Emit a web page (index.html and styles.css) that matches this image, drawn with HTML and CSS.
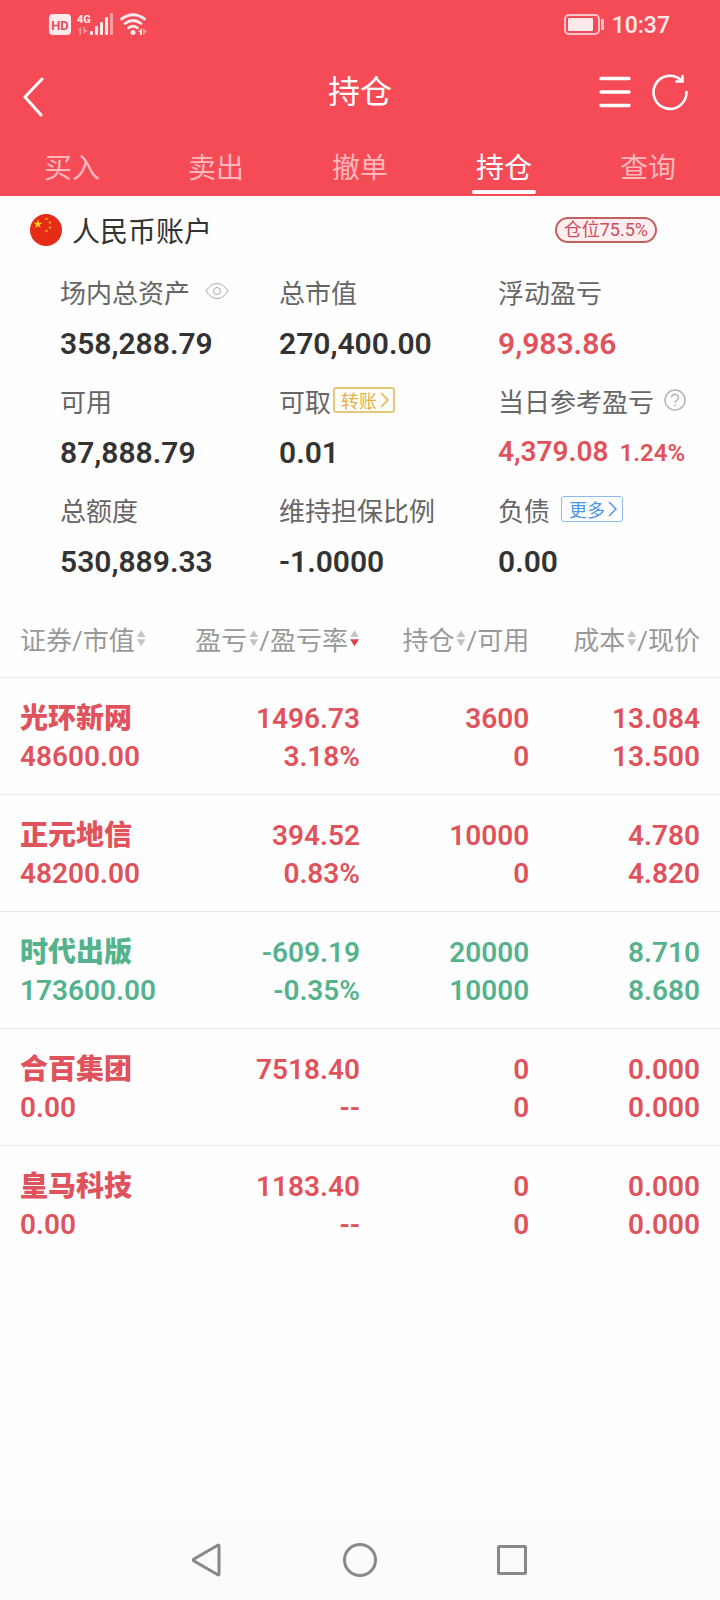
FILE: index.html
```
<!DOCTYPE html>
<html lang="zh-CN">
<head>
<meta charset="utf-8">
<meta name="viewport" content="width=device-width, initial-scale=1">
<title>持仓</title>
<link rel="stylesheet" href="styles.css">
</head>
<body>

<header class="header">
	<div class="status-bar">
		<svg class="status-icons" width="100" height="28" viewBox="0 0 100 28">
			<rect x="1" y="4" width="22" height="21" rx="4" fill="#ffe9eb"/>
			<text x="12" y="20" text-anchor="middle" font-size="13" font-weight="700" fill="#e0505c">HD</text>
			<text x="29" y="13" font-size="11" font-weight="700" fill="#ffe9eb">4G</text>
			<g fill="#ff9aa3">
				<path d="M30 20l3-3v8h-1.500v-5z"/>
				<path d="M35.500 17h1.500v3h3l-4.500 4z"/>
				<rect x="62" y="3" width="3" height="22" rx="1"/>
				<path d="M95 18l4 3.500-4 3.500z"/>
			</g>
			<g fill="#ffe9eb">
				<rect x="42" y="21" width="3" height="4" rx="1"/>
				<rect x="47" y="16" width="3" height="9" rx="1"/>
				<rect x="52" y="12" width="3" height="13" rx="1"/>
				<rect x="57" y="7" width="3" height="18" rx="1"/>
				<circle cx="85" cy="22.500" r="2.500"/>
				<path d="M94 18v7h-2v-3h-2z"/>
			</g>
			<g fill="none" stroke="#ffe9eb" stroke-width="2.800" stroke-linecap="round">
				<path d="M73.500 9q11.500-8.500 23 0"/>
				<path d="M77 13.500q8-6 16 0"/>
				<path d="M80.500 18q4.500-3.500 9 0"/>
			</g>
		</svg>
		<div class="status-right">
			<svg width="42" height="24" viewBox="0 0 42 24">
				<rect x="2" y="3" width="34" height="19" rx="4" fill="none" stroke="#ffc4c9" stroke-width="2"/>
				<rect x="5" y="6" width="25" height="13" rx="1" fill="#ffe9eb"/>
				<rect x="38" y="7" width="3" height="11" rx="1" fill="#ffc4c9"/>
			</svg>
			<span class="clock">10:37</span>
		</div>
	</div>
	<div class="title-bar">
		<button class="icon-button back" aria-label="返回">
			<svg width="24" height="40" viewBox="0 0 24 40"><path d="M20 2L3 20l16 18" fill="none" stroke="#fff" stroke-width="3" stroke-linecap="round" stroke-linejoin="round"/></svg>
		</button>
		<h1>持仓</h1>
		<div class="actions">
			<button class="icon-button" aria-label="菜单">
				<svg width="32" height="38" viewBox="0 0 32 38"><path d="M2 5.500h28M2 19h28M2 32.500h28" stroke="#fff" stroke-width="3.400" stroke-linecap="round"/></svg>
			</button>
			<button class="icon-button" aria-label="刷新">
				<svg width="38" height="38" viewBox="0 0 38 38" fill="none" stroke="#fff" stroke-width="2.600" stroke-linecap="round"><path d="M35.500 19A16.500 16.500 0 1 1 30 7M31.500 3v5.500h-6"/></svg>
			</button>
		</div>
	</div>
	<nav class="tabs">
		<a href="#">买入</a>
		<a href="#">卖出</a>
		<a href="#">撤单</a>
		<a href="#" class="active">持仓</a>
		<a href="#">查询</a>
	</nav>
</header>

<main>
	<section class="account">
		<div class="account-title">
			<svg width="32" height="32" viewBox="0 0 32 32">
				<circle cx="16" cy="16" r="16" fill="#e62c16"/>
				<path d="M8 5.500l1 3.200 3.500 0-2.800 2 1 3.300-2.700-2-2.800 2 1-3.300-2.700-2 3.400 0z" fill="#ffd21e"/>
				<g fill="#f5a01c">
					<circle cx="16.500" cy="5" r="1.200"/>
					<circle cx="20" cy="8.500" r="1.200"/>
					<circle cx="20" cy="13.500" r="1.200"/>
					<circle cx="16.500" cy="17" r="1.200"/>
				</g>
			</svg>
			<h2>人民币账户</h2>
			<span class="position">仓位75.5%</span>
		</div>
		<dl class="summary">
			<div>
				<dt>场内总资产
					<button class="icon-button eye" aria-label="隐藏金额">
						<svg width="24" height="18" viewBox="0 0 24 18" fill="none" stroke="#aaa"><path d="M1 9Q6 1.500 12 1.500T23 9Q18 16.500 12 16.500T1 9z"/><circle cx="12" cy="9" r="3.500"/></svg>
					</button>
				</dt>
				<dd>358,288.79</dd>
			</div>
			<div>
				<dt>总市值</dt>
				<dd>270,400.00</dd>
			</div>
			<div>
				<dt>浮动盈亏</dt>
				<dd class="up">9,983.86</dd>
			</div>
			<div>
				<dt>可用</dt>
				<dd>87,888.79</dd>
			</div>
			<div>
				<dt>可取<button class="tag transfer">转账<svg width="9" height="16" viewBox="0 0 9 16"><path d="M1 1l7 7-7 7"/></svg></button></dt>
				<dd>0.01</dd>
			</div>
			<div>
				<dt>当日参考盈亏
					<button class="icon-button help" aria-label="说明">
						<svg width="22" height="22" viewBox="0 0 22 22" fill="none" stroke="#b4b4b4" stroke-width="1.500"><circle cx="11" cy="11" r="10"/><path d="M7.500 8.500a3.500 3.200 0 1 1 5.500 2.600q-2 1.300-2 2.700M11 15.500v1.700"/></svg>
					</button>
				</dt>
				<dd class="up today">4,379.08 <small>1.24%</small></dd>
			</div>
			<div>
				<dt>总额度</dt>
				<dd>530,889.33</dd>
			</div>
			<div>
				<dt>维持担保比例</dt>
				<dd>-1.0000</dd>
			</div>
			<div>
				<dt>负债<button class="tag more">更多<svg width="9" height="16" viewBox="0 0 9 16"><path d="M1 1l7 7-7 7"/></svg></button></dt>
				<dd>0.00</dd>
			</div>
		</dl>
	</section>

	<table class="holdings">
		<thead>
			<tr>
				<th>证券/市值<i class="sort"></i></th>
				<th>盈亏<i class="sort"></i>/盈亏率<i class="sort desc"></i></th>
				<th>持仓<i class="sort"></i>/可用</th>
				<th>成本<i class="sort"></i>/现价</th>
			</tr>
		</thead>
		<tbody>
			<tr class="up">
				<td><b>光环新网</b><br>48600.00</td>
				<td>1496.73<br>3.18%</td>
				<td>3600<br>0</td>
				<td>13.084<br>13.500</td>
			</tr>
			<tr class="up">
				<td><b>正元地信</b><br>48200.00</td>
				<td>394.52<br>0.83%</td>
				<td>10000<br>0</td>
				<td>4.780<br>4.820</td>
			</tr>
			<tr class="down">
				<td><b>时代出版</b><br>173600.00</td>
				<td>-609.19<br>-0.35%</td>
				<td>20000<br>10000</td>
				<td>8.710<br>8.680</td>
			</tr>
			<tr class="up">
				<td><b>合百集团</b><br>0.00</td>
				<td>7518.40<br>--</td>
				<td>0<br>0</td>
				<td>0.000<br>0.000</td>
			</tr>
			<tr class="up">
				<td><b>皇马科技</b><br>0.00</td>
				<td>1183.40<br>--</td>
				<td>0<br>0</td>
				<td>0.000<br>0.000</td>
			</tr>
		</tbody>
	</table>
</main>

<footer class="system-nav">
	<button class="icon-button" aria-label="后退">
		<svg width="36" height="36" viewBox="0 0 36 36"><path d="M29 4v28q0 1.500-1.200.8L4 19q-1.500-1 0-2L27.800 3.200q1.200-.7 1.200.8z"/></svg>
	</button>
	<button class="icon-button" aria-label="主屏幕">
		<svg width="36" height="36" viewBox="0 0 36 36"><circle cx="18" cy="18" r="15.500"/></svg>
	</button>
	<button class="icon-button" aria-label="最近任务">
		<svg width="36" height="36" viewBox="0 0 36 36"><rect x="4.500" y="4.500" width="27" height="27" rx="1"/></svg>
	</button>
</footer>

</body>
</html>
```
FILE: styles.css
```
* {
	box-sizing: border-box;
}

body {
	margin: 0;
	min-height: 100vh;
	display: flex;
	flex-direction: column;
	background: #fefefe;
	color: #333;
	font-family: Roboto, "Noto Sans CJK SC", sans-serif;
}

h1, h2, dl, dd {
	margin: 0;
	font-weight: 400;
}

svg {
	display: block;
}

button {
	margin: 0;
	font-family: inherit;
	cursor: pointer;
}

.icon-button {
	padding: 0;
	border: 0;
	background: none;
}

/* header */
.header {
	background: #f54b57;
	color: #fff;
}

.status-bar {
	display: flex;
	justify-content: space-between;
	align-items: center;
	height: 48px;
	padding: 0 50px 0 48px;
}

.status-right {
	display: flex;
	align-items: center;
	gap: 7px;
}

.clock {
	padding-top: 2px;
	font-size: 23px;
	font-weight: 500;
	color: #ffe9eb;
}

.title-bar {
	display: grid;
	grid-template-columns: 1fr auto 1fr;
	align-items: center;
	height: 88px;
}

.back {
	justify-self: start;
	padding-top: 10px;
	margin-left: 22px;
}

h1 {
	padding-bottom: 6px;
	font-size: 32px;
}

.actions {
	display: flex;
	justify-content: flex-end;
	gap: 20px;
	margin-right: 31px;
}

.tabs {
	display: flex;
	height: 60px;
}

.tabs a {
	flex: 1;
	display: flex;
	flex-direction: column;
	align-items: center;
	justify-content: space-between;
	padding: 13px 0 2px;
	font-size: 28px;
	line-height: 40px;
	color: #ffb7bc;
	text-decoration: none;
}

.tabs .active {
	color: #fff;
}

.tabs .active::after {
	content: "";
	width: 64px;
	height: 4px;
	border-radius: 2px;
	background: #fff;
}

main {
	flex: 1;
}

/* account */
.account-title {
	display: flex;
	align-items: center;
	height: 68px;
	padding: 0 63px 0 30px;
}

h2 {
	margin-left: 10px;
	font-size: 28px;
}

.position {
	margin-left: auto;
	padding: 0 7px;
	border: 2px solid #c0605f;
	border-radius: 13px;
	background: #ffeef0;
	color: #c9505a;
	font-size: 18px;
	line-height: 22px;
}

.summary {
	display: grid;
	grid-template-columns: repeat(3, 1fr);
	padding: 0 3px 0 60px;
}

.summary > div {
	height: 109px;
	padding-top: 7px;
}

dt {
	display: flex;
	align-items: center;
	height: 40px;
	font-size: 26px;
	color: #666;
	white-space: nowrap;
}

dd {
	margin-top: 11px;
	font-size: 30px;
	font-weight: 600;
	line-height: 44px;
	white-space: nowrap;
}

.today {
	font-size: 28px;
	line-height: 42px;
}

.today small {
	margin-left: 4px;
	font-size: 24px;
}

.eye {
	margin-left: 15px;
}

.help {
	margin-left: 10px;
}

.tag {
	display: flex;
	align-items: center;
	gap: 3px;
	height: 26px;
	padding: 0 4px 0 6px;
	border: 2px solid;
	border-radius: 3px;
	background: none;
	font-size: 18px;
}

.tag path {
	fill: none;
	stroke: currentColor;
	stroke-width: 1.5;
}

.transfer {
	margin-left: 2px;
	border-color: #e8c878;
	color: #e5b03c;
}

.more {
	margin-left: 11px;
	padding: 0 5px 0 7px;
	border-width: 1px;
	border-color: #8dbcec;
	color: #4c96e8;
}

.up {
	color: #e0525c;
}

.down {
	color: #54b38c;
}

/* holdings */
.holdings {
	width: 100%;
	border-collapse: collapse;
	table-layout: fixed;
}

.holdings th {
	height: 86px;
	padding: 10px 0 0;
	font-size: 26px;
	font-weight: 400;
	color: #999;
	text-align: right;
	white-space: nowrap;
}

.holdings th:nth-child(-n+2) {
	width: 25%;
}

.holdings th:nth-child(3) {
	width: 23.5%;
}

.holdings th:first-child, .holdings td:first-child {
	padding-left: 20px;
	text-align: left;
}

.holdings th:last-child, .holdings td:last-child {
	padding-right: 20px;
}

.holdings td {
	height: 117px;
	padding: 4px 0 0;
	border-top: 1px solid #e8e8e8;
	font-size: 28px;
	font-weight: 600;
	line-height: 38px;
	text-align: right;
}

.sort {
	display: inline-block;
	width: 9px;
	margin: 0 1px 0 2px;
	vertical-align: 4px;
}

.sort::before, .sort::after {
	content: "";
	display: block;
	height: 7px;
	background: #c4c4c4;
}

.sort::before {
	clip-path: polygon(50% 0, 100% 100%, 0 100%);
}

.sort::after {
	margin-top: 2px;
	clip-path: polygon(0 0, 100% 0, 50% 100%);
}

.desc::after {
	background: #e0404c;
}

/* system navigation */
.system-nav {
	display: flex;
	justify-content: center;
	align-items: center;
	gap: 116px;
	height: 80px;
	background: #fbfbfb;
}

.system-nav svg {
	fill: none;
	stroke: #888;
	stroke-width: 3;
}
```
